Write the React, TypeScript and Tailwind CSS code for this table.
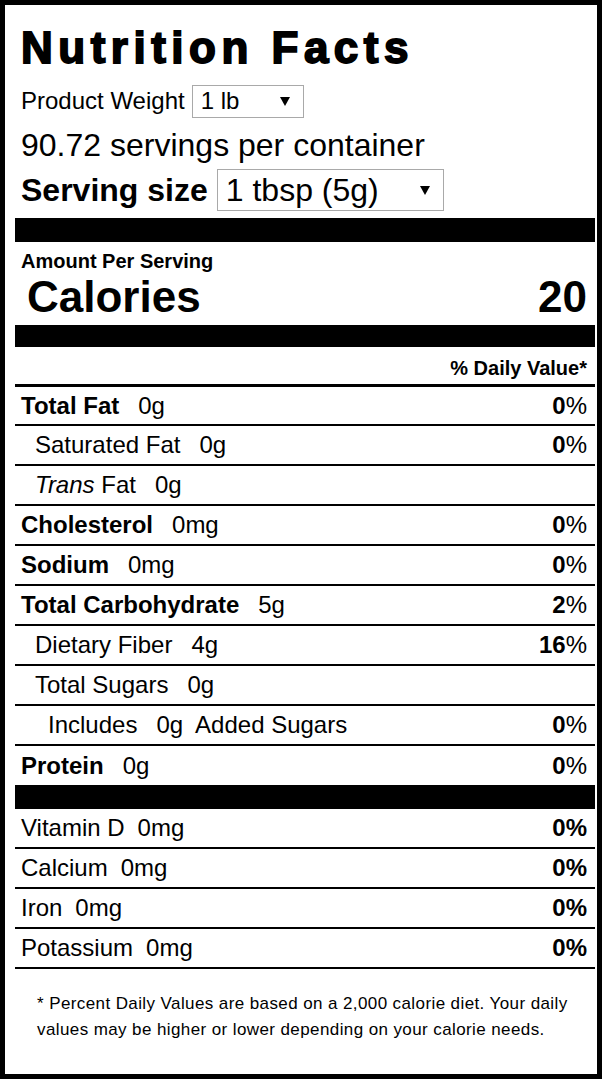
import React from "react";

const Arrow = () => (
  <svg width="10" height="9" viewBox="0 0 10 9" className="shrink-0">
    <polygon points="0,0 10,0 5,9" fill="#000" />
  </svg>
);

type RowProps = {
  label: React.ReactNode;
  value?: string;
  extra?: string;
  dv?: React.ReactNode;
  indent?: string;
  bold?: boolean;
  last?: boolean;
  h?: string;
};

const Row = ({ label, value, extra, dv, indent = "pl-[6px]", bold, last, h = "h-[40px]" }: RowProps) => (
  <div
    className={`flex ${h} items-center justify-between pr-[8px] text-[24px] leading-none ${indent} ${
      last ? "" : "border-b-2 border-black"
    }`}
  >
    <div className="flex items-center whitespace-pre">
      <span className={bold ? "font-bold" : ""}>{label}</span>
      {value !== undefined && <span className="ml-[19px]">{value}</span>}
      {extra !== undefined && <span className="ml-[12px]">{extra}</span>}
    </div>
    {dv !== undefined && <div className="whitespace-pre">{dv}</div>}
  </div>
);

const Pct = ({ n }: { n: string }) => (
  <>
    <span className="font-bold">{n}</span>%
  </>
);

const VitRow = ({ label, value }: { label: string; value: string }) => (
  <div className="flex h-[40px] items-center justify-between border-b-2 border-black pl-[6px] pr-[8px] text-[24px] leading-none">
    <div className="whitespace-pre">
      {label}
      <span className="ml-[13px]">{value}</span>
    </div>
    <div className="font-bold">0%</div>
  </div>
);

export default function App() {
  return (
    <div
      className="flex h-[1079px] w-[602px] flex-col border-[5px] border-black bg-white pl-[10px] pr-[2px] text-black"
      style={{ fontFamily: '"Liberation Sans", Arial, sans-serif' }}
    >
      {/* Title */}
      <div className="mt-[21px] flex h-[44px] items-center pl-[6px] text-[44px] font-bold leading-none tracking-[5.5px] [-webkit-text-stroke:1.8px_black]">
        Nutrition Facts
      </div>

      {/* Product weight */}
      <div className="mt-[14px] flex h-[34px] items-center pl-[6px] text-[24px] leading-none">
        <span>Product Weight</span>
        <div className="ml-[7px] flex h-[33px] w-[112px] items-center justify-between border border-[#a9a9a9] pl-[8px] pr-[13px]">
          <span>1 lb</span>
          <Arrow />
        </div>
      </div>

      {/* Servings */}
      <div className="mt-[12px] flex h-[30px] items-center pl-[6px] text-[32px] leading-none">
        90.72 servings per container
      </div>

      {/* Serving size */}
      <div className="mt-[9px] flex h-[42px] items-center pl-[6px] text-[32px] leading-none">
        <span className="font-bold">Serving size</span>
        <div className="ml-[9px] flex h-[42px] w-[227px] items-center justify-between border border-[#a9a9a9] pl-[8px] pr-[13px]">
          <span>1 tbsp (5g)</span>
          <Arrow />
        </div>
      </div>

      <div className="mt-[7px] h-[24px] bg-black" />

      {/* Amount per serving */}
      <div className="flex h-[38px] items-center pl-[6px] text-[20px] font-bold leading-none">
        Amount Per Serving
      </div>
      <div className="flex h-[34px] items-center justify-between pl-[12px] pr-[8px] text-[44px] font-bold leading-none">
        <span>Calories</span>
        <span>20</span>
      </div>

      <div className="mt-[11px] h-[22px] bg-black" />

      <div className="flex h-[40px] items-center justify-end border-b-[3px] border-black pr-[8px] pt-[4px] text-[20px] font-bold leading-none">
        % Daily Value*
      </div>

      <Row h="h-[39px]" label="Total Fat" bold value="0g" dv={<Pct n="0" />} />
      <Row label="Saturated Fat" indent="pl-[20px]" value="0g" dv={<Pct n="0" />} />
      <Row
        label={
          <>
            <i>Trans</i> Fat
          </>
        }
        indent="pl-[20px]"
        value="0g"
      />
      <Row label="Cholesterol" bold value="0mg" dv={<Pct n="0" />} />
      <Row label="Sodium" bold value="0mg" dv={<Pct n="0" />} />
      <Row label="Total Carbohydrate" bold value="5g" dv={<Pct n="2" />} />
      <Row label="Dietary Fiber" indent="pl-[20px]" value="4g" dv={<Pct n="16" />} />
      <Row label="Total Sugars" indent="pl-[20px]" value="0g" />
      <Row label="Includes" indent="pl-[33px]" value="0g" extra="Added Sugars" dv={<Pct n="0" />} />
      <Row h="h-[39px]" label="Protein" bold value="0g" dv={<Pct n="0" />} last />

      <div className="h-[24px] bg-black" />

      <VitRow label="Vitamin D" value="0mg" />
      <VitRow label="Calcium" value="0mg" />
      <VitRow label="Iron" value="0mg" />
      <VitRow label="Potassium" value="0mg" />

      <div className="flex-1 pl-[22px] pr-[12px] pt-[22px] text-[17px] leading-[26px] tracking-[0.4px]">
        * Percent Daily Values are based on a 2,000 calorie diet. Your daily values may be higher or lower
        depending on your calorie needs.
      </div>
    </div>
  );
}
